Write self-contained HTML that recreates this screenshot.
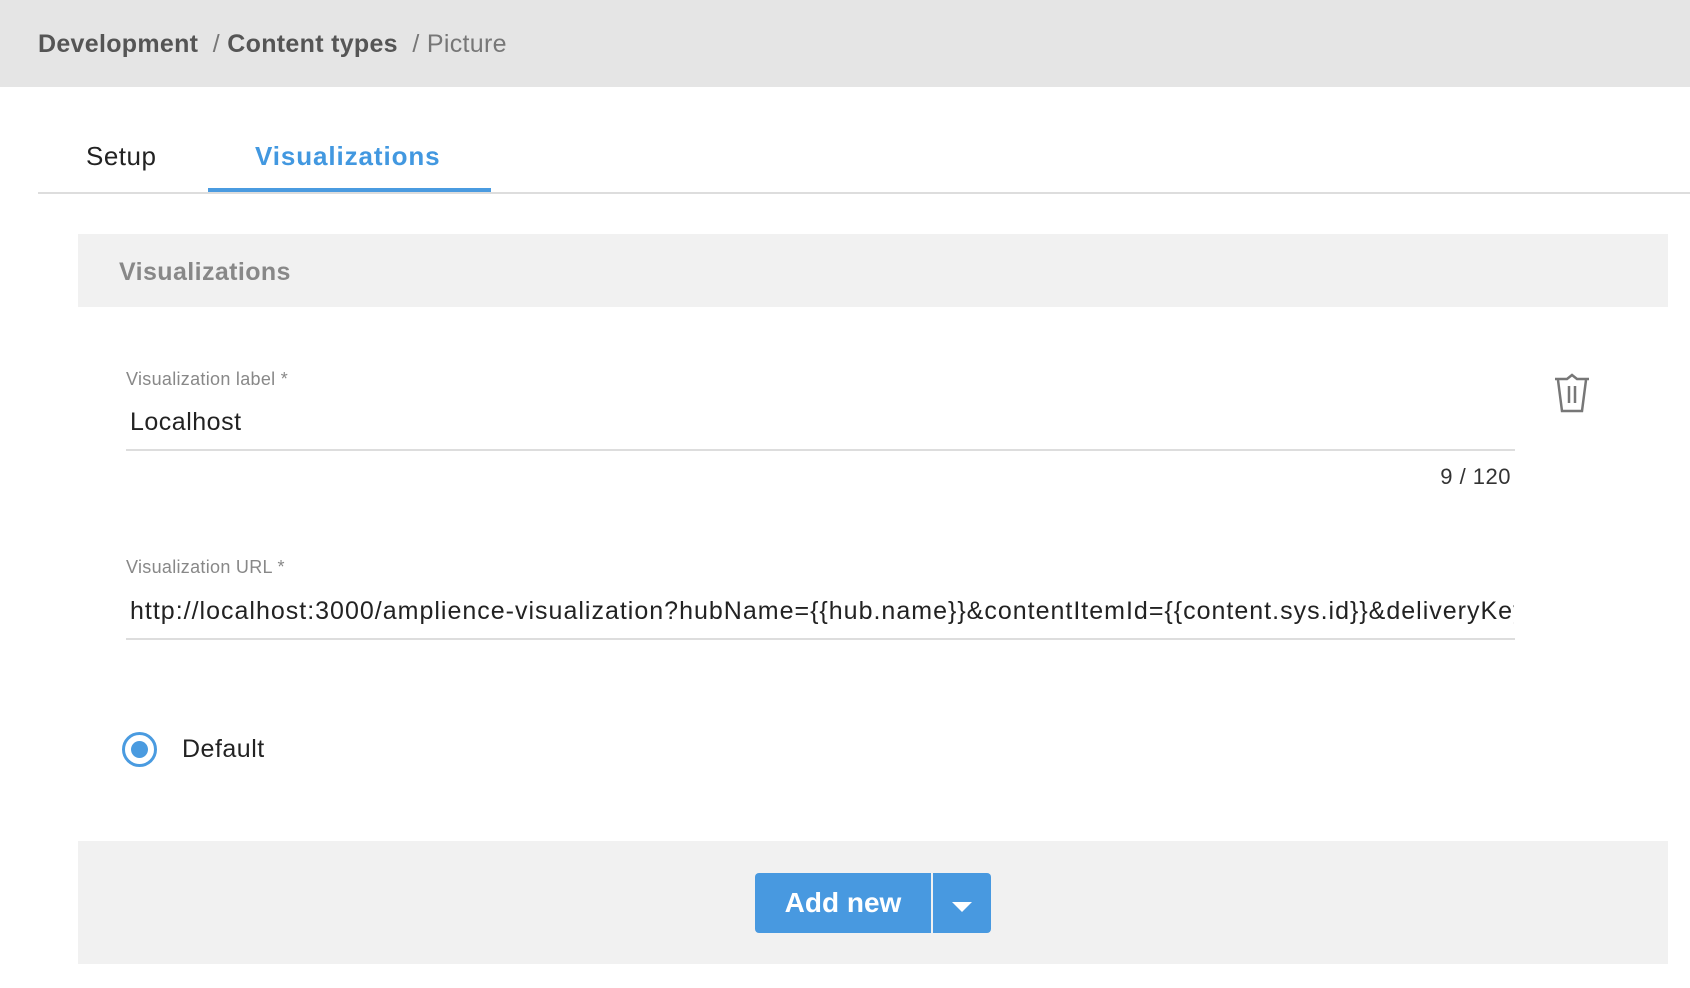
<!DOCTYPE html>
<html><head><style>
*{margin:0;padding:0;box-sizing:border-box}
body{width:1690px;height:988px;background:#fff;font-family:"Liberation Sans",sans-serif;position:relative;overflow:hidden;color:#222}
.a{position:absolute;white-space:nowrap}
</style></head><body>
<div class="a" style="left:0;top:0;width:1690px;height:87px;background:#e5e5e5"></div>
<div class="a" style="left:38px;top:28px;font-size:25px;color:#555;line-height:32px;letter-spacing:0.3px"><b style="color:#555">Development</b>&nbsp; <span style="color:#777">/</span> <b>Content types</b>&nbsp; <span style="color:#777">/ Picture</span></div>
<div class="a" style="left:86px;top:140px;font-size:26px;line-height:32px;color:#222;letter-spacing:0.5px">Setup</div>
<div class="a" style="left:255px;top:140px;font-size:26px;line-height:32px;color:#4298e0;font-weight:bold;letter-spacing:0.9px">Visualizations</div>
<div class="a" style="left:38px;top:192px;width:1652px;height:2px;background:#ddd"></div>
<div class="a" style="left:208px;top:188px;width:283px;height:4px;background:#4a9be0"></div>
<div class="a" style="left:78px;top:234px;width:1590px;height:73px;background:#f1f1f1"></div>
<div class="a" style="left:119px;top:256px;font-size:25px;line-height:32px;font-weight:bold;color:#888;letter-spacing:0.4px">Visualizations</div>
<div class="a" style="left:126px;top:368px;font-size:18px;line-height:22px;color:#888;letter-spacing:0.3px">Visualization label *</div>
<div class="a" style="left:130px;top:407px;font-size:25px;line-height:30px;color:#222;letter-spacing:0.5px">Localhost</div>
<div class="a" style="left:126px;top:449px;width:1389px;height:2px;background:#ddd"></div>
<div class="a" style="left:1400px;top:463px;width:111px;text-align:right;font-size:22px;line-height:28px;color:#333;letter-spacing:0.5px">9 / 120</div>
<svg class="a" style="left:1553px;top:372px" width="38" height="42" viewBox="0 0 38 42"><path d="M2 7 H14 L19 3 L24 7 H36" fill="none" stroke="#777" stroke-width="2.5"/><path d="M5 8 L9 39 H29 L33 8" fill="none" stroke="#777" stroke-width="2.5"/><path d="M16 14 V31 M22 14 V31" stroke="#777" stroke-width="2.5"/></svg>
<div class="a" style="left:126px;top:556px;font-size:18px;line-height:22px;color:#888;letter-spacing:0.3px">Visualization URL *</div>
<div class="a" style="left:130px;top:596px;width:1384px;overflow:hidden;font-size:25px;line-height:30px;color:#222;letter-spacing:1px">http://localhost:3000/amplience-visualization?hubName={{hub.name}}&amp;contentItemId={{content.sys.id}}&amp;deliveryKey={{content.sys.deliveryKey}}</div>
<div class="a" style="left:126px;top:638px;width:1389px;height:2px;background:#ddd"></div>
<div class="a" style="left:122px;top:732px;width:35px;height:35px;border:3.5px solid #4a9be0;border-radius:50%"></div>
<div class="a" style="left:131px;top:741px;width:17px;height:17px;background:#4a9be0;border-radius:50%"></div>
<div class="a" style="left:182px;top:734px;font-size:25px;line-height:30px;color:#222;letter-spacing:0.5px">Default</div>
<div class="a" style="left:78px;top:841px;width:1590px;height:123px;background:#f1f1f1"></div>
<div class="a" style="left:755px;top:873px;width:176px;height:60px;background:#4899e0;border-radius:4px 0 0 4px;color:#fff;font-weight:bold;font-size:28px;line-height:60px;text-align:center">Add new</div>
<div class="a" style="left:933px;top:873px;width:58px;height:60px;background:#4899e0;border-radius:0 4px 4px 0"></div>
<div class="a" style="left:952px;top:902px;width:0;height:0;border-left:10px solid transparent;border-right:10px solid transparent;border-top:10px solid #fff"></div>
</body></html>
